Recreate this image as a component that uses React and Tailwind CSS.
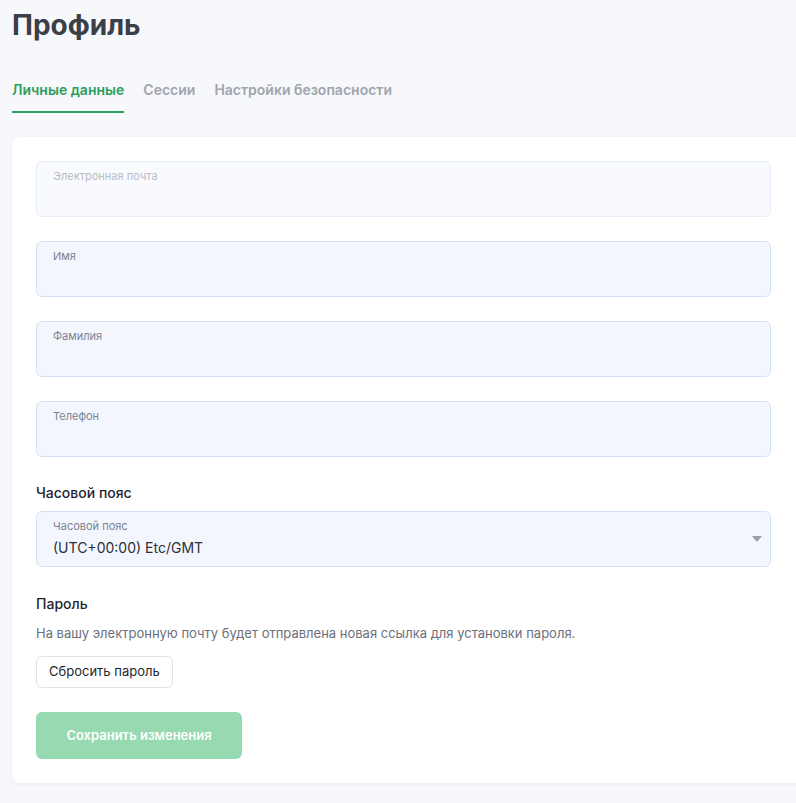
import React from 'react';

const Field = ({ label, value, muted, select }) => (
  <div
    className={`relative h-[56px] rounded-md border px-[16px] pt-[7px] ${
      muted ? 'bg-[#f9fafe] border-[#e6edf8]' : 'bg-[#f3f6fd] border-[#d4e1f4]'
    }`}
  >
    <div className={`text-[11px] leading-[14px] ${muted ? 'text-[#b8bcc6]' : 'text-[#7d8390]'}`}>{label}</div>
    {value && <div className="mt-[6px] text-[14px] leading-[18px] text-[#2b2f38]">{value}</div>}
    {select && (
      <div className="absolute right-[8px] top-[24px] w-0 h-0 border-l-[5px] border-r-[5px] border-t-[6px] border-l-transparent border-r-transparent border-t-[#9aa0ab]" />
    )}
  </div>
);

export default function App() {
  const tabs = ['Личные данные', 'Сессии', 'Настройки безопасности'];

  return (
    <div
      className="w-[796px] h-[803px] overflow-hidden bg-[#f7f8fc] pl-[12px]"
      style={{ fontFamily: 'Inter, "Noto Sans", sans-serif' }}
    >
      <h1 className="pt-[8px] text-[28px] leading-[34px] font-bold text-[#3b3f48]">Профиль</h1>

      {/* Tabs */}
      <div className="mt-[38px] flex gap-[19px]">
        {tabs.map((t, i) => (
          <div
            key={t}
            className={`pb-[11px] text-[14px] leading-[20px] font-semibold border-b-2 ${
              i === 0 ? 'text-[#2e9e5b] border-[#2e9e5b]' : 'text-[#a0a4ad] border-transparent'
            }`}
          >
            {t}
          </div>
        ))}
      </div>

      {/* Card runs past the right edge of the window */}
      <div className="mt-[24px] w-[800px] shrink-0 rounded-lg bg-white shadow-[0_1px_4px_rgba(30,40,80,0.06)] py-[24px] pl-[24px] pr-[41px]">
        <div className="flex flex-col gap-[24px]">
          <Field label="Электронная почта" muted />
          <Field label="Имя" />
          <Field label="Фамилия" />
          <Field label="Телефон" />
        </div>

        <div className="mt-[26px] text-[14px] leading-[20px] font-medium text-[#1f2430]">Часовой пояс</div>
        <div className="mt-[8px]">
          <Field label="Часовой пояс" value="(UTC+00:00) Etc/GMT" select />
        </div>

        <div className="mt-[27px] text-[14px] leading-[20px] font-medium text-[#1f2430]">Пароль</div>
        <p className="mt-[9px] text-[13px] leading-[20px] text-[#6b707b]">
          На вашу электронную почту будет отправлена новая ссылка для установки пароля.
        </p>
        <button className="mt-[13px] h-[32px] px-[12px] rounded-md border border-[#dfe2ea] bg-white text-[13px] text-[#22262e]">
          Сбросить пароль
        </button>
        <div>
          <button className="mt-[24px] h-[47px] w-[206px] rounded-md bg-[#97d9b0] text-[13px] font-semibold text-white">
            Сохранить изменения
          </button>
        </div>
      </div>
    </div>
  );
}
